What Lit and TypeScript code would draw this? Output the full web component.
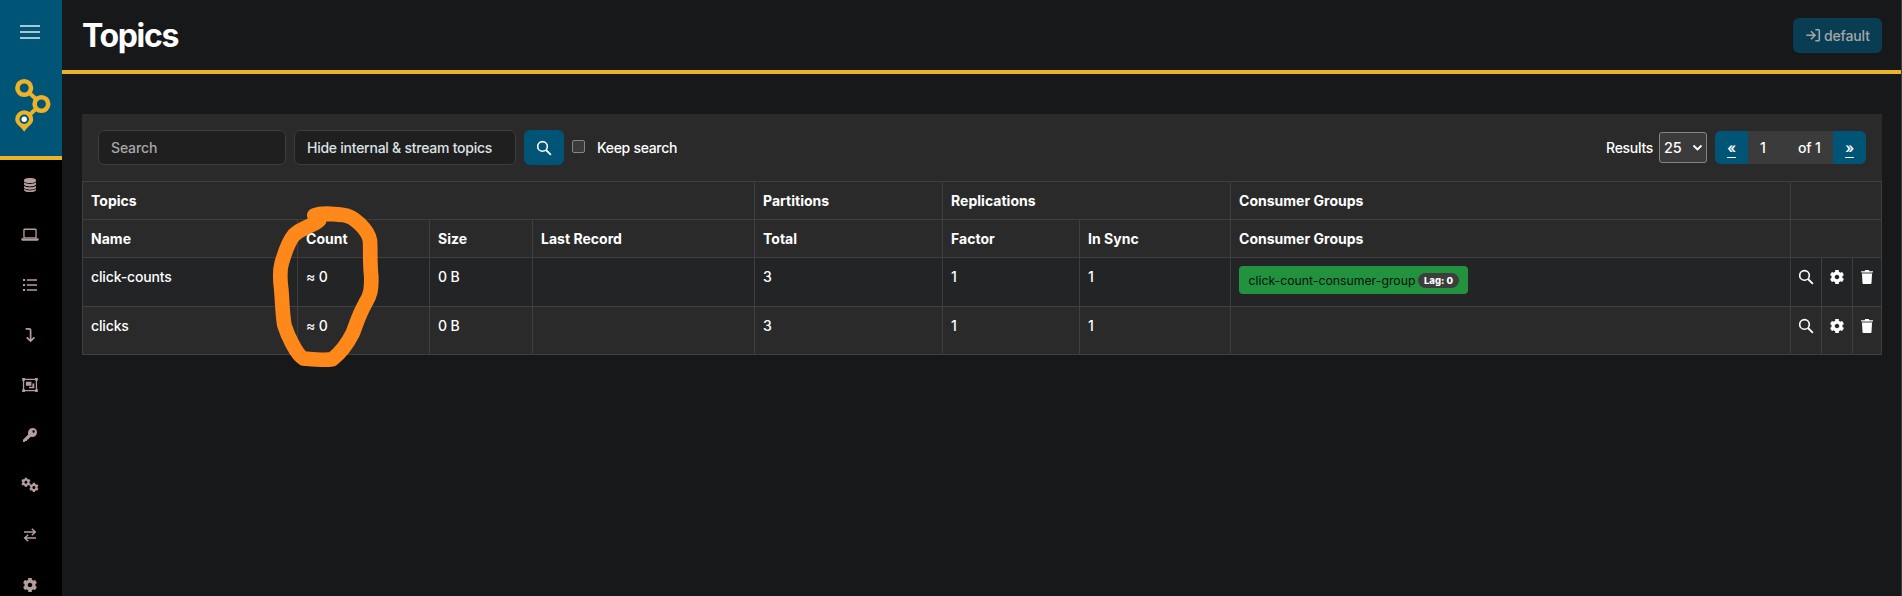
import { LitElement, html, css, svg } from "lit";
import { customElement, property } from "lit/decorators.js";

const gear =
  "M487.4 315.7l-42.6-24.6c4.3-23.2 4.3-47 0-70.2l42.6-24.6c4.9-2.8 7.1-8.6 5.5-14-11.1-35.6-30-67.8-54.7-94.6-3.8-4.1-10-5.1-14.8-2.3L380.8 110c-17.9-15.4-38.5-27.3-60.8-35.1V25.8c0-5.6-3.9-10.5-9.4-11.7-36.7-8.2-74.3-7.8-109.2 0-5.5 1.2-9.4 6.1-9.4 11.7V75c-22.2 7.9-42.8 19.8-60.8 35.1L88.7 85.5c-4.9-2.8-11-1.9-14.8 2.3-24.7 26.7-43.6 58.9-54.7 94.6-1.7 5.4.6 11.2 5.5 14L67.3 221c-4.3 23.2-4.3 47 0 70.2l-42.6 24.6c-4.9 2.8-7.1 8.6-5.5 14 11.1 35.6 30 67.8 54.7 94.6 3.8 4.1 10 5.1 14.8 2.3l42.6-24.6c17.9 15.4 38.5 27.3 60.8 35.1v49.2c0 5.6 3.9 10.5 9.4 11.7 36.7 8.2 74.3 7.8 109.2 0 5.5-1.2 9.4-6.1 9.4-11.7v-49.2c22.2-7.9 42.8-19.8 60.8-35.1l42.6 24.6c4.9 2.8 11 1.9 14.8-2.3 24.7-26.7 43.6-58.9 54.7-94.6 1.5-5.5-.7-11.3-5.6-14.1zM256 336c-44.1 0-80-35.9-80-80s35.9-80 80-80 80 35.9 80 80-35.9 80-80 80z";

// Every glyph is drawn on an 18 x 18 board.
const icons: Record<string, unknown> = {
  database: svg`<path d="M3 4.1C3 2.9 5.6 2 9 2s6 .9 6 2.1v.9C15 6.200 12.400 7.100 9 7.100S3 6.200 3 5z"/><path d="M3 6.600c1.300.9 3.600 1.300 6 1.300s4.700-.4 6-1.300v1.700c0 1.200-2.600 2.100-6 2.100s-6-.9-6-2.100z"/><path d="M3 9.900c1.300.9 3.600 1.300 6 1.300s4.700-.4 6-1.300v1.700c0 1.200-2.600 2.100-6 2.100s-6-.9-6-2.100z"/><path d="M3 13.100c1.300.9 3.600 1.300 6 1.300s4.700-.4 6-1.300v.9c0 1.200-2.600 2.100-6 2.100s-6-.9-6-2.100z"/>`,
  laptop: svg`<path fill-rule="evenodd" d="M3.700 2.600h10.600c.8 0 1.400.6 1.400 1.400v8H2.300V4c0-.8.600-1.400 1.400-1.400zm.2 1.300a.3.3 0 0 0-.3.300V11.300h10.800V4.200a.3.3 0 0 0-.3-.3z"/><path d="M.4 12.300h17.200v1.100c0 .7-.7 1.300-1.700 1.300H2.100c-1 0-1.700-.6-1.700-1.300z"/>`,
  list: svg`<path d="M2 3h2.100v2.100H2zM2 8h2.100v2.100H2zM2 13h2.100v2.100H2zM5.800 3.300H16v1.500H5.800zM5.800 8.300H16v1.500H5.800zM5.800 13.300H16v1.500H5.800z"/>`,
  down: svg`<path d="M4.600 2.900h3.300c1 0 1.700.6 1.700 1.600v10M5.700 11.400l3.900 3.700 3.800-3.700" fill="none" stroke="currentColor" stroke-width="1.700"/>`,
  group: svg`<path fill-rule="evenodd" d="M1.200 2h2.700v.7h10.200V2h2.700v2.700h-.7v8.600h.7V16h-2.700v-.7H3.900v.7H1.200v-2.700h.7V4.700h-.7zM3.900 4v.7h-.7v8.600h.7v.7h10.200v-.7h.7V4.700h-.7V4z"/><path d="M4.900 5.700h5.500v4H4.900zM11.400 7.500h1.900v4.800H8v-1.600h3.400z"/>`,
  key: svg`<path fill-rule="evenodd" d="M11.500 2A4.600 4.600 0 0 1 16 6.500 4.500 4.500 0 0 1 11.300 11c-.6 0-1-.1-1.500-.2L7 13.600l-.9.1-.3 1.200-1.400.2-.7.900H2v-2.300l5.200-5.200C6.500 5.200 8.400 2 11.500 2zm1.100 2.300a1.200 1.200 0 1 0 0 2.400 1.200 1.200 0 0 0 0-2.400z"/>`,
  gears: svg`<path transform="translate(.1 1.500) scale(.0188)" d="${gear}"/><path transform="translate(8.100 6.600) scale(.0188)" d="${gear}"/>`,
  exchange: svg`<path d="M3 6h11M10.800 2.700 14.300 6l-3.500 3.300M15 12H4M7.200 8.800 3.700 12l3.500 3.300" fill="none" stroke="currentColor" stroke-width="1.500"/>`,
  gear: svg`<path transform="translate(1.650 1.650) scale(.0287)" d="${gear}"/>`,
  search: svg`<circle cx="7.500" cy="7.400" r="4.800" fill="none" stroke="currentColor" stroke-width="1.600"/><path d="M11 11l4.900 4.900" fill="none" stroke="currentColor" stroke-width="1.800"/>`,
  trash: svg`<path d="M2 3.200h3.500l.8-1.100h3.400l.8 1.100H14v1.100H2z"/><path opacity=".6" d="M2.700 4.300h10.600v1.600H2.700z"/><path d="M3 5.900h10l-.5 9c0 .7-.5 1.100-1.200 1.100H4.700c-.7 0-1.200-.4-1.200-1.100z"/>`,
  login: svg`<path d="M1.300 8.300h8.300M6 4.300l4 4-4 4M10.300 2.800h3.100c.5 0 .9.400.9.900v9.200c0 .5-.4.900-.9.900h-3.100" fill="none" stroke="currentColor" stroke-width="1.600"/>`,
};

@customElement("ui-icon")
class UiIcon extends LitElement {
  static styles = css`
    :host { display: block; width: 18px; height: 18px; flex: none; }
    svg { display: block; width: 18px; height: 18px; fill: currentColor; }
  `;
  @property() name = "";
  render() {
    return html`<svg viewBox="0 0 18 18">${icons[this.name]}</svg>`;
  }
}

interface Topic {
  name: string; count: string; size: string; last: string;
  total: number; factor: number; sync: number; group?: string; lag?: number;
}

const topics: Topic[] = [
  { name: "click-counts", count: "≈ 0", size: "0 B", last: "", total: 3, factor: 1, sync: 1, group: "click-count-consumer-group", lag: 0 },
  { name: "clicks", count: "≈ 0", size: "0 B", last: "", total: 3, factor: 1, sync: 1 },
];

@customElement("app-root")
class AppRoot extends LitElement {
  static styles = css`
    * { box-sizing: border-box; }
    :host {
      display: flex; position: relative; height: 596px; overflow: hidden;
      background: #17181a; color: #fff; border-right: 1px solid #3c3d3f;
      font: 450 14px/21px Inter, sans-serif; letter-spacing: -0.14px;
    }
    .side { width: 62px; flex: none; background: #000; color: #b69e9e; }
    .brand { height: 160px; background: #005475; border-bottom: 4px solid #ecb228; display: flex; flex-direction: column; align-items: center; }
    .burger { width: 20px; height: 14px; margin: 25px 2px 0 0; display: flex; flex-direction: column; justify-content: space-between; }
    .bar { height: 2px; background: #a9c6d2; }
    .logo { width: 36px; height: 54px; margin: 39px 0 0 3px; }
    .nav { height: 50px; display: flex; align-items: center; justify-content: center; padding-right: 2px; }
    .main { flex: 1; min-width: 0; }
    .head { height: 74px; border-bottom: 4px solid #ecb228; padding: 0 19px 0 20px; display: flex; justify-content: space-between; align-items: center; }
    .title { margin: 1px 0 0; font-size: 32px; line-height: 38px; font-weight: 700; letter-spacing: -1.35px; }
    .login { height: 35px; width: 89px; margin-top: 1px; border-radius: 6px; background: #093d54; color: #a4a7a9; display: flex; align-items: center; padding-left: 12px; gap: 1px; }
    .card { margin: 40px 19px 0 20px; background: #2a2a2a; }
    .tools { height: 67px; padding: 0 16px; display: flex; align-items: center; }
    .field { height: 35px; border: 1px solid #3d3d3d; border-radius: 6px; background: #1f1f1f; padding: 6px 12px; color: #a6a8aa; margin-right: 8px; white-space: nowrap; }
    .search { width: 188px; }
    .filter { width: 222px; color: #dee2e6; letter-spacing: -0.25px; }
    .go { width: 40px; height: 35px; border-radius: 6px; background: #005475; display: flex; align-items: center; justify-content: center; }
    .check { width: 13px; height: 13px; border: 1px solid #858585; border-radius: 2px; background: #3b3b3b; margin: 0 12px 2px 8px; }
    .keep { letter-spacing: -0.3px; }
    .results { margin-left: auto; margin-right: 6px; letter-spacing: -0.3px; }
    .per { width: 48px; height: 31px; border: 1px solid #858585; border-radius: 3px; background: #3b3b3b; display: flex; align-items: center; justify-content: space-between; padding: 0 3px 0 4px; font-size: 14.5px; margin-right: 8px; }
    .chev { width: 11px; height: 8px; fill: none; stroke: #fff; stroke-width: 1.8; }
    .pages { height: 33px; width: 151px; border-radius: 6px; overflow: hidden; display: flex; background: #3b3b3b; line-height: 34px; }
    .arrow { width: 33px; background: #005475; text-align: center; text-decoration: underline; text-decoration-thickness: 1px; text-underline-offset: 4px; font-weight: 600; }
    .page { width: 50px; padding-left: 12px; }
    .of { flex: 1; }
    .table { display: grid; grid-template-columns: 215px 132px 103px 222px 188px 137px 151px 560px 31px 31px 30px; grid-template-rows: 38px 38px 49px 49px; }
    .cell { border-top: 1px solid #3f3f3f; border-left: 1px solid #3f3f3f; padding: 8px; white-space: nowrap; }
    .table > .end { border-right: 1px solid #3f3f3f; }
    .last { border-bottom: 1px solid #3f3f3f; }
    .odd { background: #222426; }
    .th { font-weight: 700; letter-spacing: 0.02px; }
    .s4 { grid-column: span 4; }
    .s3 { grid-column: span 3; }
    .s2 { grid-column: span 2; }
    .act { padding: 10px 0 0 6px; }
    .tag { display: inline-flex; align-items: center; width: 229px; height: 28px; border-radius: 4px; background: #22923f; color: #04140a; font-size: 12.25px; font-weight: 400; letter-spacing: 0; padding: 0 9px 0 9.500px; justify-content: space-between; }
    .lag { background: #3d3d3d; color: #fff; font-weight: 800; font-size: 9.5px; line-height: 15px; border-radius: 8px; width: 41px; text-align: center; }
    .ink { position: absolute; left: 250px; top: 190px; width: 150px; height: 190px; }
  `;

  row(t: Topic, i: number) {
    const c = `cell ${i % 2 === 0 ? "odd" : ""} ${i === topics.length - 1 ? "last" : ""}`;
    return html`
      ${[t.name, t.count, t.size, t.last, t.total, t.factor, t.sync].map((v) => html`<div class=${c}>${v}</div>`)}
      <div class=${c}>${t.group ? html`<span class="tag"><span class="gname">${t.group}</span><span class="lag">Lag: ${t.lag}</span></span>` : ""}</div>
      <div class="${c} act"><ui-icon name="search"></ui-icon></div>
      <div class="${c} act"><ui-icon name="gear"></ui-icon></div>
      <div class="${c} act end"><ui-icon name="trash"></ui-icon></div>`;
  }

  render() {
    const nav = ["database", "laptop", "list", "down", "group", "key", "gears", "exchange", "gear"];
    return html`
      <div class="side">
        <div class="brand">
          <div class="burger"><div class="bar"></div><div class="bar"></div><div class="bar"></div></div>
          <svg class="logo" viewBox="0 0 36 54">
            <g fill="none" stroke="#ecb228">
              <path d="M9.200 10.200 26.500 26 9.200 41.400" stroke-width="4"/>
              <g fill="#005475" stroke-width="4.600"><circle cx="9.200" cy="10" r="6.800"/><circle cx="26.400" cy="26" r="6.800"/></g>
            </g>
            <path d="M.2 41.300a9 9 0 0 1 18 0c0 4.900-5.200 6.900-9 12.400C5.400 48.200.2 46.200.2 41.300z" fill="#ecb228"/>
            <circle cx="9.200" cy="41.300" r="4.700" fill="#005475"/><circle cx="9.200" cy="41.300" r="2.700" fill="#fff"/>
          </svg>
        </div>
        ${nav.map((n) => html`<div class="nav"><ui-icon name=${n}></ui-icon></div>`)}
      </div>
      <div class="main">
        <div class="head">
          <h1 class="title">Topics</h1>
          <div class="login"><ui-icon name="login"></ui-icon><span>default</span></div>
        </div>
        <div class="card">
          <div class="tools">
            <div class="field search">Search</div>
            <div class="field filter">Hide internal &amp; stream topics</div>
            <div class="go"><ui-icon name="search"></ui-icon></div>
            <div class="check"></div><span class="keep">Keep search</span>
            <span class="results">Results</span>
            <div class="per">25<svg class="chev" viewBox="0 0 11 8"><path d="M1.500 1.500l4 4 4-4"/></svg></div>
            <div class="pages"><span class="arrow">«</span><span class="page">1</span><span class="of">of 1</span><span class="arrow">»</span></div>
          </div>
          <div class="table">
            <div class="cell th s4">Topics</div><div class="cell th">Partitions</div><div class="cell th s2">Replications</div><div class="cell th">Consumer Groups</div><div class="cell s3 end"></div>
            ${["Name", "Count", "Size", "Last Record", "Total", "Factor", "In Sync", "Consumer Groups"].map((h) => html`<div class="cell th">${h}</div>`)}<div class="cell s3 end"></div>
            ${topics.map((t, i) => this.row(t, i))}
          </div>
        </div>
      </div>
      <svg class="ink" viewBox="0 0 450 570">
        <path d="M193 76C215 68 245 71 280 75C312 78 355 120 360 152C362 185 359 220 364 262C364 300 362 315 345 342C325 378 320 400 308 430C292 462 270 490 247 508C220 512 190 508 160 505C140 495 112 435 103 405C97 370 97 335 94 300C90 270 88 245 95 220C105 185 115 155 132 135C155 112 190 108 208 90" fill="none" stroke="#ff881b" stroke-width="44" stroke-linecap="round" stroke-linejoin="round"/>
      </svg>`;
  }
}
